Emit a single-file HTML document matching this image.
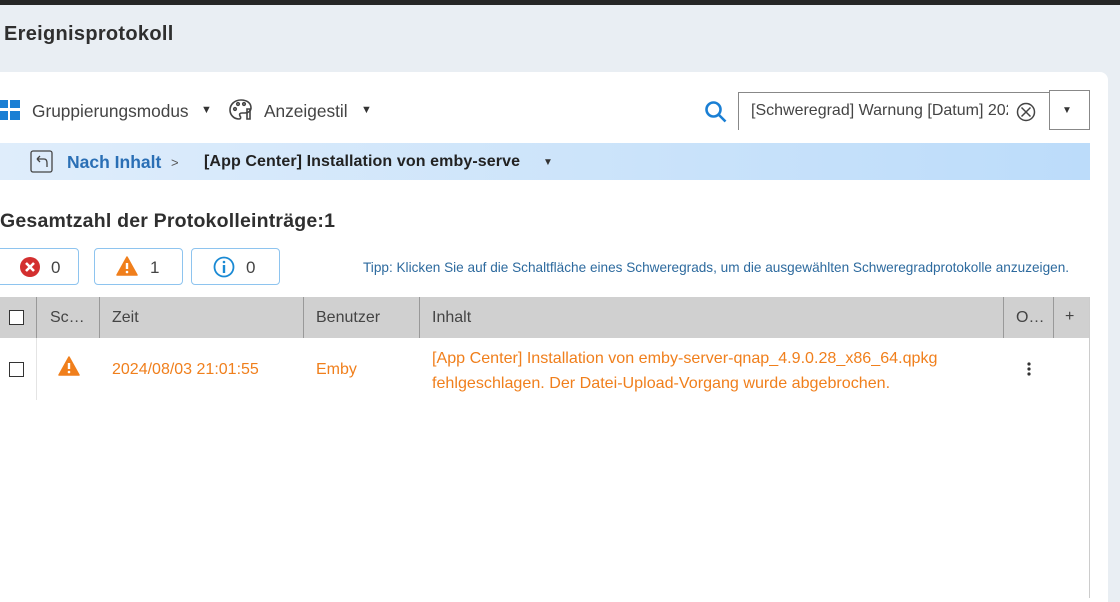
<!DOCTYPE html>
<html><head><meta charset="utf-8"><style>
*{margin:0;padding:0;box-sizing:border-box}
body{width:1120px;height:598px;overflow:hidden;background:#e9eef3;font-family:"Liberation Sans",Arial,sans-serif;position:relative;color:#333}
.a{position:absolute;white-space:nowrap}
</style></head><body>
<div class="a" style="left:0;top:0;width:1120px;height:5px;background:#262626"></div>
<div class="a" style="left:4px;top:23px;font-size:20px;font-weight:bold;color:#2f2f2f;letter-spacing:0.3px">Ereignisprotokoll</div>
<div class="a" style="left:0;top:72px;width:1108px;height:530px;background:#fff;border-top-right-radius:8px"></div>

<svg class="a" style="left:0;top:100px" width="21" height="21"><rect x="0" y="0" width="8" height="8" fill="#1a7fd4"/><rect x="10" y="0" width="10" height="8" fill="#1a7fd4"/><rect x="0" y="11" width="8" height="9" fill="#1a7fd4"/><rect x="10" y="11" width="10" height="9" fill="#1a7fd4"/></svg>
<div class="a" style="left:32px;top:101px;font-size:17.3px;color:#444">Gruppierungsmodus</div>
<div class="a" style="left:201px;top:104px;font-size:11px;color:#333">▼</div>
<svg class="a" style="left:228px;top:97px" width="26" height="26" fill="none" stroke="#444" stroke-width="1.6"><path d="M13 3C6 3 2 8 2 13c0 5 4 9 9 9 2 0 2-2 1-3-1-2 0-3 2-3h3c3 0 6-2 6-5 0-5-4-8-10-8z"/><circle cx="7" cy="12" r="1.3"/><circle cx="10" cy="7" r="1.3"/><circle cx="16" cy="7" r="1.3"/><path d="M19 12v10h3V12z"/></svg>
<div class="a" style="left:264px;top:101px;font-size:17.3px;color:#444">Anzeigestil</div>
<div class="a" style="left:361px;top:104px;font-size:11px;color:#333">▼</div>

<svg class="a" style="left:704px;top:100px" width="24" height="24" fill="none" stroke="#1a7fd4" stroke-width="2.6"><circle cx="9.5" cy="9.5" r="7"/><path d="M14.5 14.5l7 7"/></svg>
<div class="a" style="left:738px;top:92px;width:312px;height:38px;border:1px solid #888;border-bottom:none;background:#fff"></div>
<div class="a" style="left:751px;top:102px;font-size:16px;color:#444;width:257px;overflow:hidden">[Schweregrad] Warnung [Datum] 2024/08/03</div>
<svg class="a" style="left:1015px;top:101px" width="22" height="22" fill="none" stroke="#444" stroke-width="1.5"><circle cx="11" cy="11" r="8.5"/><path d="M6.5 6.5l9 9M15.5 6.5l-9 9"/></svg>
<div class="a" style="left:1049px;top:90px;width:41px;height:40px;border:1px solid #888;background:#fff"></div>
<div class="a" style="left:1062px;top:105px;font-size:10px;color:#333">▼</div>

<div class="a" style="left:0;top:143px;width:1090px;height:37px;background:linear-gradient(90deg,#dfedfb,#bcdcfa)"></div>
<svg class="a" style="left:30px;top:150px" width="24" height="24" fill="none" stroke="#444" stroke-width="1.3"><rect x="1" y="1" width="21" height="21" rx="2"/><path d="M7 9h7c3 0 3 3 3 4v4M7 9l3-3M7 9l3 3"/></svg>
<div class="a" style="left:67px;top:152px;font-size:17.5px;font-weight:bold;color:#2a6fb5">Nach Inhalt</div>
<div class="a" style="left:171px;top:155px;font-size:13px;color:#555">&gt;</div>
<div class="a" style="left:204px;top:153px;font-size:16px;font-weight:bold;color:#222;letter-spacing:0.1px">[App Center] Installation von emby-serve</div>
<div class="a" style="left:543px;top:157px;font-size:10px;color:#333">▼</div>

<div class="a" style="left:0;top:210px;font-size:19.5px;font-weight:bold;color:#2f2f2f;letter-spacing:0.2px">Gesamtzahl der Protokolleinträge:1</div>

<div class="a" style="left:-10px;top:248px;width:89px;height:37px;border:1px solid #8ec4ef;border-radius:4px"></div>
<svg class="a" style="left:20px;top:257px" width="20" height="20"><circle cx="10" cy="10" r="10" fill="#d32f2f"/><path d="M6 6l8 8M14 6l-8 8" stroke="#fff" stroke-width="2.6"/></svg>
<div class="a" style="left:51px;top:258px;font-size:17px;color:#444">0</div>
<div class="a" style="left:94px;top:248px;width:89px;height:37px;border:1px solid #8ec4ef;border-radius:4px"></div>
<svg class="a" style="left:116px;top:256px" width="22" height="20"><path d="M11 1L21 19H1z" fill="#f07f1c" stroke="#f07f1c" stroke-linejoin="round" stroke-width="1.5"/><path d="M11 7v6" stroke="#fff" stroke-width="2.4"/><circle cx="11" cy="16" r="1.3" fill="#fff"/></svg>
<div class="a" style="left:150px;top:258px;font-size:17px;color:#444">1</div>
<div class="a" style="left:191px;top:248px;width:89px;height:37px;border:1px solid #8ec4ef;border-radius:4px"></div>
<svg class="a" style="left:213px;top:256px" width="22" height="22" fill="none" stroke="#1a8ad4" stroke-width="1.8"><circle cx="11" cy="11" r="9.5"/><path d="M11 9v8" stroke-width="2.4"/><circle cx="11" cy="6" r="1.3" fill="#1a8ad4" stroke="none"/></svg>
<div class="a" style="left:246px;top:258px;font-size:17px;color:#444">0</div>
<div class="a" style="left:363px;top:260px;font-size:13.6px;color:#2d6a9e">Tipp: Klicken Sie auf die Schaltfläche eines Schweregrads, um die ausgewählten Schweregradprotokolle anzuzeigen.</div>

<div class="a" style="left:0;top:297px;width:1090px;height:41px;background:#d0d0d0"></div>
<div class="a" style="left:1089px;top:297px;width:1px;height:301px;background:#ccc"></div>
<div class="a" style="left:36px;top:338px;width:1px;height:62px;background:#e4e4e4"></div>
<div class="a" style="left:9px;top:310px;width:15px;height:15px;border:1.5px solid #333;background:#fff"></div>
<div class="a" style="left:36px;top:297px;width:1px;height:41px;background:#999"></div>
<div class="a" style="left:50px;top:309px;font-size:16px;color:#444">Sc…</div>
<div class="a" style="left:99px;top:297px;width:1px;height:41px;background:#999"></div>
<div class="a" style="left:112px;top:309px;font-size:16px;color:#444">Zeit</div>
<div class="a" style="left:303px;top:297px;width:1px;height:41px;background:#999"></div>
<div class="a" style="left:316px;top:309px;font-size:16px;color:#444">Benutzer</div>
<div class="a" style="left:419px;top:297px;width:1px;height:41px;background:#999"></div>
<div class="a" style="left:432px;top:309px;font-size:16px;color:#444">Inhalt</div>
<div class="a" style="left:1003px;top:297px;width:1px;height:41px;background:#999"></div>
<div class="a" style="left:1016px;top:309px;font-size:16px;color:#444">O…</div>
<div class="a" style="left:1053px;top:297px;width:1px;height:41px;background:#999"></div>
<div class="a" style="left:1065px;top:308px;font-size:16px;color:#444">+</div>

<div class="a" style="left:9px;top:362px;width:15px;height:15px;border:1.5px solid #333;background:#fff"></div>
<svg class="a" style="left:58px;top:356px" width="22" height="20"><path d="M11 1L21 19H1z" fill="#f07f1c" stroke="#f07f1c" stroke-linejoin="round" stroke-width="1.5"/><path d="M11 7v6" stroke="#fff" stroke-width="2.4"/><circle cx="11" cy="16" r="1.3" fill="#fff"/></svg>
<div class="a" style="left:112px;top:361px;font-size:16px;color:#f07f1c">2024/08/03 21:01:55</div>
<div class="a" style="left:316px;top:361px;font-size:16px;color:#f07f1c">Emby</div>
<div class="a" style="left:432px;top:346px;font-size:16.1px;color:#f07f1c;line-height:25px">[App Center] Installation von emby-server-qnap_4.9.0.28_x86_64.qpkg<br>fehlgeschlagen. Der Datei-Upload-Vorgang wurde abgebrochen.</div>
<svg class="a" style="left:1026px;top:362px" width="6" height="16"><circle cx="3" cy="2" r="1.6" fill="#333"/><circle cx="3" cy="7" r="1.6" fill="#333"/><circle cx="3" cy="12" r="1.6" fill="#333"/></svg>
</body></html>
